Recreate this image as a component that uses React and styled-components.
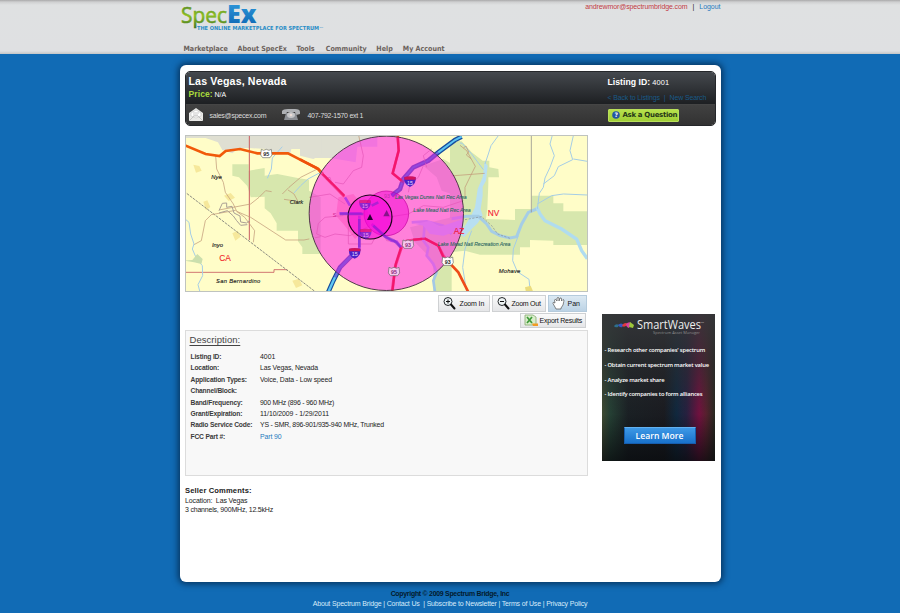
import React from "react";
import styled, { createGlobalStyle } from "styled-components";

const Global = createGlobalStyle`
  * { box-sizing: border-box; }
  body { margin: 0; background: #116bb5; font-family: "Liberation Sans", Arial, sans-serif; font-size: 7px; color: #222; }
  a { color: inherit; text-decoration: none; }
`;
const Page = styled.div`width: 900px; height: 613px; overflow: hidden; background: #116bb5; display: flex; flex-direction: column; align-items: center;`;
const TopBar = styled.header`
  width: 100%; height: 54px; flex: none; display: flex; justify-content: center;
  background: linear-gradient(#a9a9aa 0, #cfd0d1 2px, #dfe1e2 5px, #dfe0e2 51px, #c3c5c6 54px);
`;
const TopInner = styled.div`width: 541px; height: 54px; display: flex; justify-content: space-between;`;
const Brand = styled.div`display: flex; flex-direction: column;`;
const Logo = styled.svg`display: block; width: 150px; height: 34px; overflow: visible;`;
const Nav = styled.nav`display: flex; gap: 10px; padding: 10px 0 0 4px; font: bold 7.1px/10px "DejaVu Sans Condensed", "DejaVu Sans", sans-serif; font-stretch: condensed; color: #6b625c;`;
const NavLink = styled.a`width: ${p => p.$w}px; white-space: nowrap;`;
const Account = styled.div`display: flex; gap: 5px; padding: 2px 0 0; font-size: 7px; line-height: 9px; white-space: nowrap;`;
const Email = styled.a`color: #c23a42; letter-spacing: -.12px;`;
const Logout = styled.a`color: #2479bd; letter-spacing: -.03px;`;

const Card = styled.main`
  width: 541px; height: 517px; flex: none; margin-top: 11px; border-radius: 6px; background: #fff;
  box-shadow: 0 0 6px 2px #06345f; padding: 6px 5px 0;
`;
const TitlePanel = styled.section`width: 531px; height: 55px; border-radius: 5px; overflow: hidden; border: 1px solid #25272a; color: #fff;`;
const TitleTop = styled.div`height: 32px; display: flex; background: linear-gradient(#45494e, #1d1f22);`;
const TitleBottom = styled.div`height: 21px; display: flex; align-items: center; background: linear-gradient(#414141, #323232); border-top: 1px solid #454545; color: #ddd;`;
const TitleLeft = styled.div`width: 422px; padding-left: 3px;`;
const Title = styled.h1`margin: 3px 0 0; font-size: 10.6px; line-height: 13px; letter-spacing: .15px;`;
const Price = styled.div`font-size: 7px; line-height: 12px; letter-spacing: -.1px;`;
const PriceLabel = styled.b`font-size: 8.5px; color: #a9d93c; letter-spacing: .1px;`;
const ListingLine = styled.div`margin-top: 4px; line-height: 12px; font-size: 7.4px; letter-spacing: .1px;`;
const ListingLabel = styled.b`font-size: 8.7px; letter-spacing: .02px;`;
const BackLinks = styled.div`display: flex; gap: 4px; margin-top: 4px; line-height: 9px; color: #195a87; white-space: nowrap; letter-spacing: -.15px;`;
const Contacts = styled.div`width: 422px; display: flex; align-items: center; padding-left: 3px; font-size: 7px;`;
const ContactIcon = styled.svg`width: ${p => p.$w}px; height: 14px; margin-right: ${p => p.$gap}px; flex: none;`;
const ContactText = styled.span`width: ${p => p.$w}px; letter-spacing: ${p => p.$ls}px; white-space: nowrap;`;
const Ask = styled.button`
  width: 71px; height: 13px; padding: 0 0 0 3px; border: 1px solid #b9df5a; border-radius: 1px; background: linear-gradient(#b7e14c, #a0ce36);
  display: flex; align-items: center; gap: 3px; font: bold 7px/11px "DejaVu Sans", sans-serif; letter-spacing: -.33px; color: #263817; white-space: nowrap;
`;
const AskIcon = styled.svg`width: 8px; height: 8px; flex: none;`;

const Columns = styled.div`display: flex; margin-top: 9px;`;
const MainColumn = styled.div`width: 403px;`;
const SideColumn = styled.aside`margin: 179px 0 0 14px; width: 113px;`;
const Map = styled.svg`display: block; width: 403px; height: 157px;`;
const Tools = styled.div`display: flex; justify-content: flex-end; gap: 2px; margin-top: ${p => p.$top}px; padding-right: ${p => p.$right || 0}px;`;
const Tool = styled.button`
  width: ${p => p.$w}px; height: ${p => p.$h}px; padding: 0 0 0 3px; border: 1px solid ${p => p.$active ? "#b5cbdc" : "#cfd1d3"};
  background: ${p => p.$active ? "linear-gradient(#dce9f3,#bcd3e5)" : "linear-gradient(#fafafa,#e5e6e8)"};
  display: flex; align-items: center; gap: ${p => p.$gap}px; font: 7px "Liberation Sans", sans-serif; letter-spacing: ${p => p.$ls}px; color: #111; white-space: nowrap;
`;
const ToolIcon = styled.svg`width: 15px; height: 15px; flex: none;`;
const Description = styled.section`height: 146px; margin-top: 2px; border: 1px solid #dcdcdc; background: #f8f8f8; padding: 3px 5px;`;
const Heading = styled.h2`margin: 0 0 5px -1px; font-weight: 400; font-size: 9.5px; line-height: 12px; letter-spacing: .05px; text-decoration: underline; text-underline-offset: 1.5px; text-decoration-thickness: 1px; color: #444;`;
const Details = styled.dl`margin: 0; display: grid; grid-template-columns: 69.5px 1fr; grid-auto-rows: 11.4px; line-height: 11.4px; font-size: 6.9px;`;
const Term = styled.dt`font-weight: bold; font-size: 6.7px; color: #3a3a3a; letter-spacing: -.17px; white-space: nowrap;`;
const Value = styled.dd`margin: 0; color: ${p => p.$link ? "#2579bd" : "#222"}; letter-spacing: ${p => p.$ls}px; white-space: nowrap;`;
const Comments = styled.section`margin: 11px 0 0 .5px; font-size: 7px; line-height: 9px; letter-spacing: ${-.15}px;`;
const CommentsTitle = styled.h3`margin: 0; font-size: 7.6px; line-height: 8.5px; letter-spacing: .13px; color: #222;`;
const CommentLine = styled.div`letter-spacing: ${p => p.$ls}px;`;

const Ad = styled.div`
  width: 113px; height: 147px; color: #fff; display: flex; flex-direction: column; align-items: center;
  background:
    linear-gradient(rgba(53,54,57,.94) 0, rgba(44,45,48,.55) 36%, transparent 68%, rgba(8,10,13,.75) 100%),
    linear-gradient(90deg, #3f4a32 0, #254034 7%, #1a2024 23%, #1a1b20 55%, #10283e 66%, #27203f 75%, #71113f 86%, #57202e 92%, #26281f 100%);
`;
const AdLogo = styled.svg`width: 113px; height: 29px; display: block; flex: none;`;
const AdList = styled.ul`list-style: none; margin: 0; padding: 0 0 0 3px; width: 100%; font: 600 5.8px/14.8px "Open Sans", sans-serif;`;
const AdItem = styled.li`letter-spacing: -.19px; white-space: nowrap;`;
const Learn = styled.button`
  margin: 25px 0 0 3px; width: 72px; height: 17px; border: 1px solid #175eae; border-top-color: #62b1f0; background: linear-gradient(#3e99e6, #1871cb);
  color: #fff; font: 600 8.6px/14px "Open Sans", sans-serif; padding: 0; white-space: nowrap; letter-spacing: 0;
`;
const Footer = styled.footer`margin-top: 7px; text-align: center; color: #d8ecfb; font-size: 7px; line-height: 10px; white-space: nowrap;`;
const Copyright = styled.div`font-weight: bold; color: #031a2c; font-size: 6.9px; letter-spacing: -.25px;`;
const FooterLinks = styled.div`letter-spacing: -.17px; white-space: pre;`;

const details = [
  ["Listing ID:", "4001", 0], ["Location:", "Las Vegas, Nevada", -.1], ["Application Types:", "Voice, Data - Low speed", -.12],
  ["Channel/Block:", "", 0], ["Band/Frequency:", "900 MHz (896 - 960 MHz)", -.23], ["Grant/Expiration:", "11/10/2009 - 1/29/2011", -.06],
  ["Radio Service Code:", "YS - SMR, 896-901/935-940 MHz, Trunked", -.21], ["FCC Part #:", "Part 90", -.1],
];

function Shield({ x, y, n }) {
  return <g transform={`translate(${x} ${y})`}>
    <path d="M-17-13Q-10-16 0-14Q10-16 17-13Q20 8 0 16Q-20 8-17-13Z" fill="#4a20c8" />
    <path d="M-17-14Q0-18 17-14V-6H-17Z" fill="#d3105c" />
    <text y="9" textAnchor="middle" fontSize="16" fill="#eadcff">{n}</text>
  </g>;
}
function Route({ x, y, n, tint }) {
  return <g transform={`translate(${x} ${y})`}>
    <path d="M-15-13L-8-10L0-13L8-10L15-13L17 4L11 12H-11L-17 4Z" fill={tint ? "#f7c7ee" : "#fff"} stroke="#666" strokeWidth="2" />
    <text y="7" textAnchor="middle" fontSize="16" fontWeight="bold" fill={tint ? "#8c2a7c" : "#222"}>{n}</text>
  </g>;
}

function CoverageMap() {
  const road = { fill: "none", stroke: "#c19a78", strokeWidth: 2.2 };
  const creek = { fill: "none", stroke: "#a5cde6", strokeWidth: 3 };
  const park = { fontSize: 15.5, fontStyle: "italic", fill: "#2f6a64", stroke: "#2f6a64", strokeWidth: .3 };
  const county = { fontSize: 17.5, fontStyle: "italic", fill: "#222", stroke: "#222", strokeWidth: .4 };
  return <Map viewBox="185 135 403 157" fontFamily="Liberation Sans, sans-serif">
    <rect x="185" y="135" width="403" height="157" fill="#fffdc8" />
    <g transform="translate(184 134) scale(.33333)">
      <path d="M3 3H580V38H520L515 85L475 78L435 72H380L375 45H322L318 62L270 55L248 45L196 42H165L145 58L115 48L102 25L65 12H3Z" fill="#dfdfd2" />
      <path d="M145 91H194V110L242 102V125L280 120L345 133L375 137V170L410 190V360H355V340L342 322V290H278V268L260 238L242 223V188L200 190L190 156L165 130L145 125Z" fill="#d7e7ad" />
      <path d="M28 92l18 4l7 14l-17 6M58 203l12-4l9 20l-13 10M120 185l20-8l13 14l-19 10M145 298l16-8l9 18l-16 12M325 440l20-6l10 20l-19 8M370 35l12 5v16l-10 6Z" fill="#f6e89b" />
      <path d="M196 0V318" stroke="#c95c62" strokeWidth="3" />
      <path d="M0 415H270V407H310" fill="none" stroke="#c95c62" strokeWidth="2.5" />
      <path d="M0 172L395 474" stroke="#8b8b80" strokeWidth="3" strokeDasharray="8 3" />
      <path d="M95 65L98 105L118 145L124 175L148 210L158 232L200 250L305 318L360 318L410 308M105 228L200 210L225 190L245 170L263 173M30 332L52 320L64 260L82 242L155 229M158 232L182 250L212 290L208 325M300 196L340 202M295 180L315 160L350 130L400 105M312 168L330 180L345 208" {...road} />
      <path d="M105 230L115 208L128 207V220L144 217L150 237L168 246L170 264L188 267L198 258M105 237L130 230L148 246L158 260L170 274L190 272" fill="none" stroke="#aaa095" strokeWidth="3" />
      <path d="M0 252L15 265L20 300L30 330L25 345L38 375L55 395L56 425L42 452L48 474M410 115L372 135L350 155L330 177M295 38L265 72L262 105L250 133M30 375L52 385" {...creek} />
      <path d="M0 33L65 60L107 66L125 51L168 45L220 58L265 58L312 58L360 83L400 103L417 120" fill="none" stroke="#f15a0a" strokeWidth="8" />
      <path d="M0 380L25 378L40 360L56 375L52 390L30 385" fill="#cbdfad" />
      <Route x={247} y={59} n="95" />
    </g>
    <g transform="translate(450 134) scale(.33333)">
      <path d="M0 22H35L65 55L98 80H118V100L145 105L147 130H115V150L112 225L108 255L195 258V225H245V185H310V208H340V232H412V333H310V320L240 318V340H210V362H90L45 350L0 355Z" fill="#d7e7ad" />
      <path d="M104 83L113 95L108 140L98 158V185L92 225L98 245L83 268L65 285L42 310L30 300L45 275L63 245L75 220L83 165L98 130Z" fill="#b8dff2" />
      <path d="M0 255L50 247H85L110 270L125 292L150 305L180 312L200 308L215 270L235 235L260 225" fill="none" stroke="#a5cde6" strokeWidth="9" />
      <path d="M260 218L270 240L285 260L335 285L380 315L395 350L412 374" fill="none" stroke="#b0dcef" strokeWidth="10" />
      <path d="M105 90L115 60L123 35L145 5M0 22L37 28L65 60L100 107M308 0L300 30L313 65L300 100L285 132L280 160L268 178L262 225M370 5L360 50L368 77L325 98L313 125L280 150M370 75L412 82M262 210L305 185L340 180L412 183M205 305L190 345L188 380L202 413L237 436L240 465M65 290L45 345L38 400L50 474" {...creek} />
      <path d="M0 126L104 118M25 30L50 50L76 97L62 125L45 160V190M40 42l8-6l8 18l-7 9l14 11" {...road} />
      <path d="M244 0V235" stroke="#999892" strokeWidth="2.5" />
      <path d="M45 257L95 248L125 275L143 300L180 313" fill="none" stroke="#858e98" strokeWidth="2" strokeDasharray="7 4" />
      <path d="M225 460l17-5l8 19h-22" fill="#ebdc7e" />
    </g>
    <g transform="translate(300 134) scale(.33333)">
      <path d="M85 0H105V12H85Z M0 12H65V62L40 75L0 65Z" fill="#dfdfd2" />
      <path d="M28 200L45 300V360H28Z M455 25L480 20V60H455Z M370 95L430 75L455 90V180L425 170L410 130Z M330 280L455 250V474H400V400L380 360L345 325Z" fill="#d7e7ad" />
      <path d="M115 190L160 180L205 235L210 280L165 315L130 270L108 245Z" fill="#ffc1a4" />
      <path d="M155 365L120 400L100 440L85 474" fill="none" stroke="#164c9b" strokeWidth="14" />
      <path d="M155 365L120 400L100 440L85 474" fill="none" stroke="#60c8f2" strokeWidth="7" />
      <path d="M485 8L465 18L415 55L385 80L340 100L310 135L300 165L275 185" fill="none" stroke="#174d9e" strokeWidth="14" />
      <path d="M485 8L465 18L415 55L385 80L340 100L310 135L300 165L275 185" fill="none" stroke="#5cc4f2" strokeWidth="6" />
      <path d="M0 76L55 105L65 118L133 188" fill="none" stroke="#ef510c" strokeWidth="8" />
      <path d="M293 0L296 50L278 118L310 145M276 474L285 400L305 340L320 320L375 314L415 335L430 365L447 385L475 415L505 474" fill="none" stroke="#ee4b19" strokeWidth="8" />
      <path d="M60 112L75 132L90 130L98 155L132 186M175 0L190 65L185 100L160 110L130 150L105 145M28 190L90 180L135 210M55 268L75 250L130 245M55 268L50 300L75 310L105 300L150 305L210 275M145 240L145 330H215L225 310M248 290L260 320L282 322M260 250L325 240L370 215L430 220L490 200M380 100L370 65L395 45M370 95L355 130L330 150L325 175" {...road} />
      <path d="M135 190L150 215M118 238H185M178 245V350M215 270L255 308L275 320L290 323L303 340" fill="none" stroke="#5157df" strokeWidth="8" />
      <path d="M335 265L380 262L430 275L455 300M375 260L370 320L385 340L380 365L400 390L410 415L400 440L405 474" fill="none" stroke="#a3c8e6" strokeWidth="8" />
      <path d="M345 270L390 260L420 278L490 255V285L430 305L390 300L370 275Z" fill="#b8d6ec" />
      <circle cx="259" cy="238" r="231.5" fill="#ff28e7" fillOpacity=".59" stroke="#51384a" strokeWidth="3" />
      <circle cx="259" cy="238" r="67" fill="#f300d4" fillOpacity=".5" stroke="#c4009e" strokeWidth="2" />
      <circle cx="210" cy="249" r="66" fill="#f500dc" fillOpacity=".55" stroke="#1d001b" strokeWidth="3.5" />
      <path d="M190 240H120M178 255V340M215 215L235 205M220 275L257 308L282 320L302 340M275 185L300 165L310 135L340 100L385 80L415 55M155 365L120 400L105 430" fill="none" stroke="#6b25cc" strokeOpacity=".5" strokeWidth="8" />
      <path d="M293 10L296 50L278 118L305 140M339 317L375 314L415 335L430 370M303 340L287 390L278 468M68 120L133 185" fill="none" stroke="#f10b60" strokeOpacity=".75" strokeWidth="7" />
      <Shield x={330} y={143} n="15" /><Shield x={164} y={358} n="15" />
      <g opacity=".6"><Shield x={195} y={213} n="15" /><Shield x={197} y={300} n="15" /></g>
      <Route x={324} y={331} n="93" tint /><Route x={282} y={413} n="95" tint /><Route x={443} y={382} n="93" />
      <path d="M210 240L219 258H201Z" fill="#280031" /><path d="M260 228L269 247H250Z" fill="#861489" />
      <text x="252" y="193" fontSize="16" opacity=".4" fill="#6d176c">93</text>
      <text x="285" y="194" {...park} textLength="215">Las Vegas Dunes Natl Rec Area</text>
      <text x="340" y="233" {...park} textLength="172">Lake Mead Natl Rec Area</text>
      <text x="413" y="335" {...park} textLength="218">Lake Mead Natl Recreation Area</text>
      <text x="461" y="301" fontSize="25" fill="#f11534" stroke="#f11534" strokeWidth=".3">AZ</text>
      <text x="563" y="245" fontSize="25" fill="#f11534" stroke="#f11534" strokeWidth=".3">NV</text>
      <text x="596" y="418" {...county} textLength="65">Mohave</text>
      <text x="98" y="249" fontSize="16" fill="#d4228f">S</text>
    </g>
    <g transform="translate(184 134) scale(.33333)">
      <text x="82" y="136" {...county}>Nye</text><text x="317" y="210" {...county}>Clark</text>
      <text x="84" y="338" {...county}>Inyo</text><text x="96" y="448" {...county} textLength="133">San Bernardino</text>
      <text x="106" y="380" fontSize="25" fill="#f11d28" stroke="#f11d28" strokeWidth=".3">CA</text>
    </g>
    <rect x="185.5" y="135.5" width="402" height="156" fill="none" stroke="#bfc3bf" />
  </Map>;
}

function ZoomIcon({ plus }) {
  return <ToolIcon viewBox="0 0 15 15"><circle cx="6" cy="5.5" r="4" fill="#eef4f5" stroke="#272a2c" strokeWidth="1" />
    <path d={plus ? "M4 5.5H8M6 3.5V7.5" : "M4 5.5H8"} stroke="#111" strokeWidth="1" /><path d="M9 8.5L12.5 12.5" stroke="#111" strokeWidth="2" strokeLinecap="round" /></ToolIcon>;
}
export default function App() {
  return <><Global /><Page>
    <TopBar><TopInner><Brand>
      <Logo viewBox="0 0 150 34">
        <defs><linearGradient id="green" x2="0" y2="1"><stop stopColor="#376c20" /><stop offset=".55" stopColor="#8bbd24" /><stop offset="1" stopColor="#376c20" /></linearGradient>
          <linearGradient id="blue" x2="0" y2="1"><stop stopColor="#36a6e5" /><stop offset="1" stopColor="#0a5fae" /></linearGradient></defs>
        <text x="1" y="23" fontFamily="Open Sans, sans-serif" fontSize="22" textLength="46" lengthAdjust="spacingAndGlyphs" fill="url(#green)" stroke="url(#green)" strokeWidth=".6">Spec</text>
        <text x="47" y="23" fontFamily="Open Sans, sans-serif" fontWeight="800" fontSize="25" textLength="29.5" lengthAdjust="spacingAndGlyphs" fill="url(#blue)">Ex</text>
        <text x="17" y="30" fontFamily="DejaVu Sans, sans-serif" fontWeight="bold" fontSize="5.5" textLength="122" lengthAdjust="spacingAndGlyphs" fill="#278cc6">THE ONLINE MARKETPLACE FOR SPECTRUM</text>
        <text x="139.5" y="28" fontSize="2.4" fill="#278cc6">TM</text>
      </Logo>
      <Nav><NavLink $w={44}>Marketplace</NavLink><NavLink $w={49}>About SpecEx</NavLink><NavLink $w={19.3}>Tools</NavLink><NavLink $w={40.5}>Community</NavLink><NavLink $w={16.5}>Help</NavLink><NavLink $w={42}>My Account</NavLink></Nav>
    </Brand><Account><Email>andrewmor@spectrumbridge.com</Email><span>|</span><Logout>Logout</Logout></Account></TopInner></TopBar>
    <Card>
      <TitlePanel>
        <TitleTop><TitleLeft><Title>Las Vegas, Nevada</Title><Price><PriceLabel>Price:</PriceLabel> N/A</Price></TitleLeft>
          <div><ListingLine><ListingLabel>Listing ID:</ListingLabel> 4001</ListingLine><BackLinks><a>&lt; Back to Listings</a><span>|</span><a>New Search</a></BackLinks></div></TitleTop>
        <TitleBottom><Contacts>
          <ContactIcon $w={14} $gap={7} viewBox="0 0 14 14"><path d="M0 5L7 0L14 5V13H0Z" fill="#e9e9e7" /><path d="M2 5L7 2L12 5V8L7 10L2 8Z" fill="#fff" stroke="#bbb" strokeWidth=".5" /><path d="M0 13L5 8H9L14 13M4 5H10M4 7H9" fill="none" stroke="#aaa" strokeWidth=".6" /></ContactIcon>
          <ContactText $w={71} $ls={-.25}>sales@specex.com</ContactText>
          <ContactIcon $w={20} $gap={7} viewBox="0 0 20 14"><path d="M1 6V3Q2 1 7 1H14Q19 1 19 4V6L15 7L14 4H6L5 6Z" fill="#aeb0b4" /><path d="M5 5H15L17 12H3Z" fill="#8b8e94" /><ellipse cx="10" cy="7" rx="4" ry="3" fill="#c4c5c8" /><circle cx="10" cy="7" r="1.3" fill="#ecdcd7" /></ContactIcon>
          <ContactText $w={60} $ls={-.28}>407-792-1570 ext 1</ContactText>
        </Contacts><Ask><AskIcon viewBox="0 0 8 8"><circle cx="4" cy="4" r="3.8" fill="#2456a1" /><text x="4" y="6.2" textAnchor="middle" fontSize="6" fill="#fff">?</text></AskIcon>Ask a Question</Ask></TitleBottom>
      </TitlePanel>
      <Columns><MainColumn><CoverageMap />
        <Tools $top={3} $right={1}>
          <Tool $w={52} $h={17} $gap={3} $ls={-.15}><ZoomIcon plus />Zoom In</Tool>
          <Tool $w={54} $h={17} $gap={1} $ls={-.25}><ZoomIcon />Zoom Out</Tool>
          <Tool $w={39} $h={17} $gap={1} $ls={0} $active><ToolIcon viewBox="0 0 15 15"><path d="M3.5 12L1 7.5Q.5 5.5 3 7L2.5 4Q3 2.5 4.3 4L5 5V2Q6 .8 7 2V5L8 2Q9.5 1.5 9.5 3V5L11 3.5Q12.5 3.5 11.8 5.5L11 9L9 12V13H4Z" fill="#fff" stroke="#555" strokeWidth=".7" /></ToolIcon>Pan</Tool>
        </Tools>
        <Tools $top={1} $right={2}><Tool $w={66} $h={15} $gap={1} $ls={-.22}><ToolIcon viewBox="0 0 15 15"><path d="M1 2H9L12 4V12H1Z" fill="#d9edcb" stroke="#86a96f" strokeWidth=".8" /><path d="M3 4L8 10M8 4L3 10" stroke="#3d9a38" strokeWidth="1.7" /><path d="M8 10.5H14V13H9Z" fill="#f29b24" /></ToolIcon>Export Results</Tool></Tools>
        <Description><Heading>Description:</Heading><Details>{details.map(([term, value, ls]) => <React.Fragment key={term}><Term>{term}</Term><Value $ls={ls} $link={term === "FCC Part #:"}>{value}</Value></React.Fragment>)}</Details></Description>
        <Comments><CommentsTitle>Seller Comments:</CommentsTitle><CommentLine $ls={-.13}>Location:&nbsp; Las Vegas</CommentLine><CommentLine $ls={-.2}>3 channels, 900MHz, 12.5kHz</CommentLine></Comments>
      </MainColumn><SideColumn><Ad>
        <AdLogo viewBox="0 0 113 29">
          <path d="M12 12Q14 9 17 11L16 13Q13 14 12 12Z" fill="#2d6f8c" /><path d="M16 11Q19 8 22 11L20 13Q18 14 16 11Z" fill="#3656c4" />
          <path d="M20 12Q23 14 26 10L24 9Q21 9 20 12Z" fill="#e3393f" /><path d="M24 10Q27 7 29 9L27 14Q24 13 24 10Z" fill="#d8429d" /><path d="M28 8L32 11L31 14L27 13Z" fill="#9dc63b" />
          <text x="35" y="15" fontFamily="Open Sans, sans-serif" fontSize="12" fill="#eee" textLength="64" lengthAdjust="spacingAndGlyphs">SmartWaves</text><text x="99" y="9" fontSize="2" fill="#ccc">TM</text>
          <text x="51" y="19.5" fontFamily="Open Sans, sans-serif" fontSize="4.2" fill="#8c8c8c" textLength="47" lengthAdjust="spacingAndGlyphs">Spectrum Asset Manager</text></AdLogo>
        <AdList><AdItem>- Research other companies' spectrum</AdItem><AdItem>- Obtain current spectrum market value</AdItem><AdItem>- Analyze market share</AdItem><AdItem>- Identify companies to form alliances</AdItem></AdList>
        <Learn>Learn More</Learn>
      </Ad></SideColumn></Columns>
    </Card>
    <Footer><Copyright>Copyright © 2009 Spectrum Bridge, Inc</Copyright><FooterLinks><a>About Spectrum Bridge</a> | <a>Contact Us</a>  | <a>Subscribe to Newsletter</a> | <a>Terms of Use</a> | <a>Privacy Policy</a></FooterLinks></Footer>
  </Page></>;
}
